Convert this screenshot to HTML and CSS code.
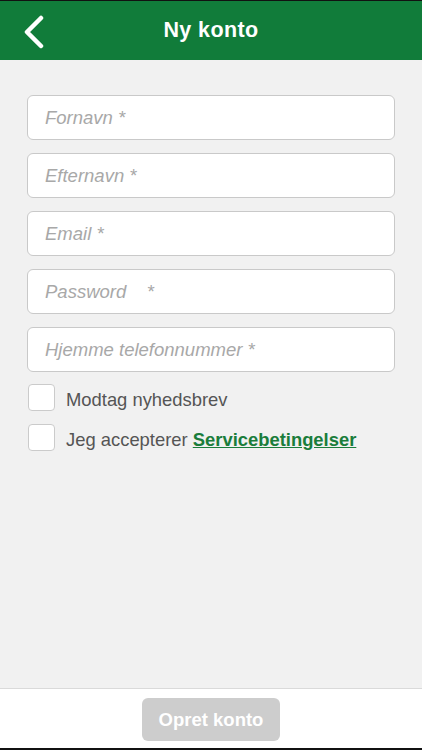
FILE: index.html
```html
<!DOCTYPE html>
<html lang="da">
<head>
<meta charset="utf-8">
<title>Ny konto</title>
<link rel="stylesheet" href="styles.css">
</head>
<body>
<div class="app">
  <header class="topbar">
    <button class="back" aria-label="Tilbage">
      <svg width="24" height="34" viewBox="0 0 24 34"><path d="M19 3 L5 17 L19 31" fill="none" stroke="#fff" stroke-width="4.5" stroke-linecap="round" stroke-linejoin="round"/></svg>
    </button>
    <h1 class="title">Ny konto</h1>
  </header>
  <main class="content">
    <form class="form">
      <input class="field" type="text" placeholder="Fornavn *">
      <input class="field" type="text" placeholder="Efternavn *">
      <input class="field" type="email" placeholder="Email *">
      <input class="field" type="password" placeholder="Password&nbsp;&nbsp;&nbsp;&nbsp;*">
      <input class="field" type="tel" placeholder="Hjemme telefonnummer *">
      <div class="checks">
        <label class="check"><span class="box"></span><span class="label">Modtag nyhedsbrev</span></label>
        <label class="check"><span class="box"></span><span class="label">Jeg accepterer <a class="link" href="#">Servicebetingelser</a></span></label>
      </div>
    </form>
  </main>
  <footer class="footer">
    <button class="submit" type="button">Opret konto</button>
  </footer>
</div>
</body>
</html>
```
FILE: styles.css
```css
* { box-sizing: border-box; }
html, body { margin: 0; padding: 0; }
body {
  font-family: "Liberation Sans", Arial, sans-serif;
  background: #111;
}
.app {
  height: 750px;
  display: flex;
  flex-direction: column;
  border-top: 1px solid #111;
  border-bottom: 2px solid #111;
  background: #f1f1f1;
}
.topbar {
  height: 59px;
  background: #117c3a;
  display: flex;
  align-items: center;
  justify-content: center;
  position: relative;
  flex: none;
}
.back {
  position: absolute;
  left: 22px;
  top: 14px;
  background: none;
  border: 0;
  padding: 0;
  margin: 0;
  display: block;
}
.back svg { display: block; }
.title {
  margin: 0;
  color: #fff;
  font-size: 21.5px;
  font-weight: bold;
  letter-spacing: 0.4px;
}
.content {
  flex: 1;
  background: #f1f1f1;
  padding: 35px 27px 0 27px;
}
.form {
  display: flex;
  flex-direction: column;
  gap: 13px;
}
.field {
  width: 368px;
  height: 45px;
  border: 1.5px solid #c9c9c9;
  border-radius: 6px;
  background: #fff;
  padding: 1px 17px 0 17px;
  font-family: "Liberation Sans", Arial, sans-serif;
  font-size: 18.5px;
  color: #333;
  outline: none;
}
.field::placeholder {
  color: #a8a8a8;
  font-style: italic;
}
.checks {
  display: flex;
  flex-direction: column;
  gap: 13px;
  padding-left: 1px;
  margin-top: -1px;
}
.check {
  display: flex;
  align-items: center;
  gap: 11px;
  height: 27px;
}
.box {
  width: 27px;
  height: 27px;
  background: #fff;
  border: 1px solid #cbcbcb;
  border-radius: 4px;
  flex: none;
}
.label {
  font-size: 18.4px;
  color: #555;
  padding-top: 5px;
}
.link {
  color: #1a7d3b;
  font-weight: bold;
  text-decoration: underline;
}
.footer {
  flex: none;
  height: 60px;
  background: #fff;
  border-top: 1px solid #dadada;
  display: flex;
  justify-content: center;
  padding-top: 9px;
}
.submit {
  width: 138px;
  height: 43px;
  border: 0;
  border-radius: 6px;
  background: #cdcdcd;
  color: #fff;
  font-family: "Liberation Sans", Arial, sans-serif;
  font-size: 18.5px;
  font-weight: bold;
}
```
